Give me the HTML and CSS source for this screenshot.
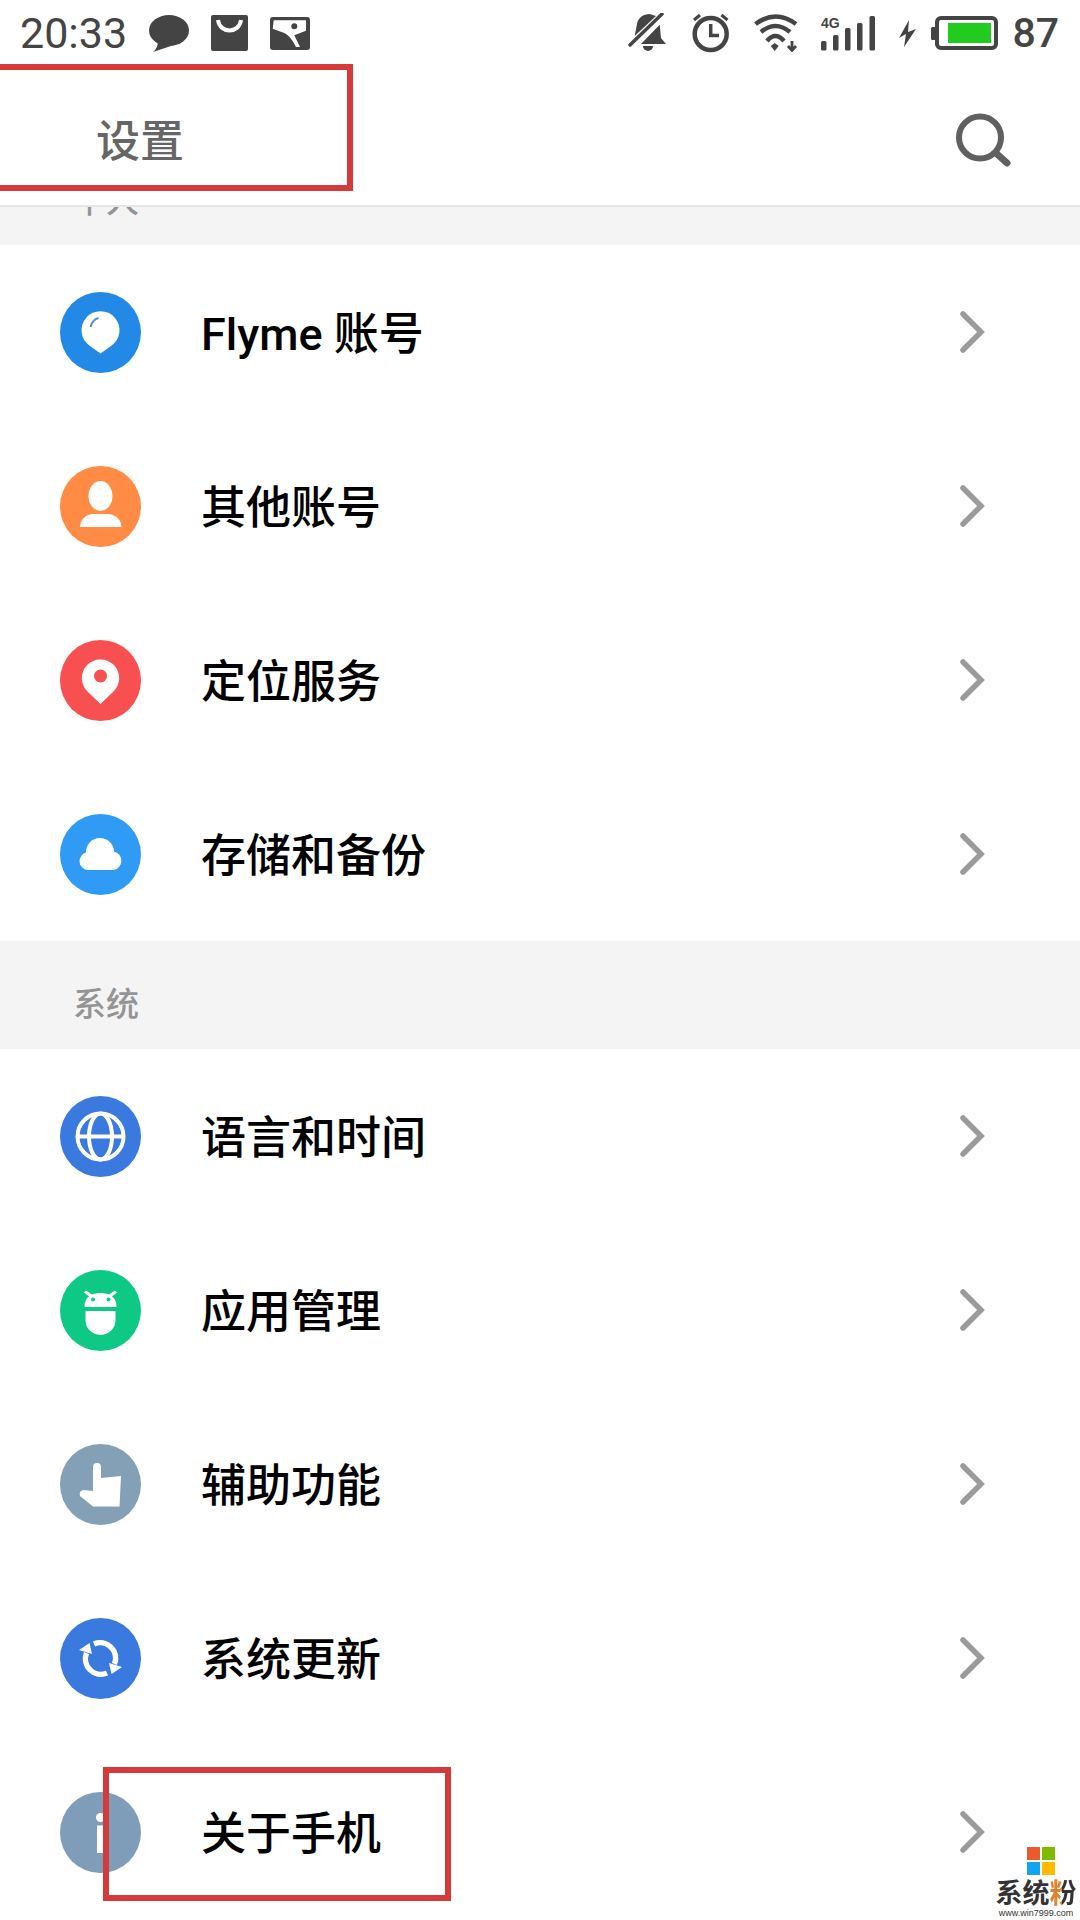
FILE: index.html
```html
<!DOCTYPE html>
<html lang="zh-CN">
<head>
    <meta charset="UTF-8">
    <meta name="viewport" content="width=device-width, initial-scale=1.0">
    <title>设置</title>
    <link rel="stylesheet" href="styles.css">
</head>
<body>
    <svg class="defs" width="0" height="0">
        <symbol id="chev" viewBox="0 0 26 46">
            <path d="M4 5 L22 23 L4 41" fill="none" stroke="#9b9b9b" stroke-width="5.5" stroke-linecap="round" stroke-linejoin="miter"/>
        </symbol>
    </svg>

    <div class="status">
        <div class="status-left">
            <span class="time">20:33</span>
            <svg width="40" height="37" viewBox="0 0 40 37"><ellipse cx="20" cy="15.5" rx="20" ry="15.5" fill="#444"/><path d="M9 26 L14 29 L22 31 L4 37 Q9 33 9 26Z" fill="#444"/></svg>
            <svg width="37" height="36" viewBox="0 0 37 36"><rect width="37" height="36" rx="2" fill="#444"/><path d="M7 5 C9 19 28 19 30 5" fill="none" stroke="#fff" stroke-width="4"/></svg>
            <svg width="40" height="33" viewBox="0 0 40 33"><rect width="40" height="33" rx="3" fill="#444"/><path d="M3.7 3.3 H36 V13.7 L24.3 18.3 L30 30 H26 C23 24 19 18 14.3 16 L2.7 11.7Z" fill="#fff"/><circle cx="24.3" cy="9.3" r="3" fill="#444"/></svg>
        </div>
        <div class="status-right">
            <svg class="bell" width="39" height="40" viewBox="0 0 39 40"><path d="M6.7 23 L9 11 C10 5 15 1 21.7 1 L28 3Z" fill="#444"/><path d="M31.7 11.7 L33 25 L38 31 H13Z" fill="#444"/><path d="M15 33 H25 A5 5 0 0 1 15 33Z" fill="#444"/><path d="M2 32 L34 1" stroke="#444" stroke-width="3.5" stroke-linecap="round"/></svg>
            <svg width="40" height="40" viewBox="0 0 40 40"><circle cx="19.7" cy="21" r="16" fill="none" stroke="#444" stroke-width="4.5"/><path d="M19.7 11 V22.5 H28" fill="none" stroke="#444" stroke-width="3.5"/><path d="M3 7 L9 2 M36.5 7 L30.5 2" stroke="#444" stroke-width="3"/></svg>
            <svg width="46" height="38" viewBox="0 0 46 38"><g fill="none" stroke="#444" stroke-width="4.5"><path d="M2.5 10 Q22.5 -5 43 10"/><path d="M8 18 Q22.5 6 37 18"/><path d="M14 27 Q22.5 17 31 27"/></g><path d="M21.7 37 L17.7 32 L21.7 29 L25.7 32Z" fill="#444"/><path d="M39 27 V35 M35 32 L39 36.5 L43 32" fill="none" stroke="#444" stroke-width="2.8"/></svg>
            <svg width="55" height="35" viewBox="0 0 55 35"><text x="0" y="12" class="net">4G</text><g fill="#444"><rect x="0" y="25" width="5.5" height="9.5" rx="1.5"/><rect x="12" y="19" width="5.5" height="15.5" rx="1.5"/><rect x="24" y="12" width="5.5" height="22.5" rx="1.5"/><rect x="36" y="7" width="5.5" height="27.5" rx="1.5"/><rect x="48.5" y="0" width="5.5" height="34.5" rx="1.5"/></g></svg>
            <div class="charge">
                <svg width="19" height="27" viewBox="0 0 19 27"><path d="M11 0 L1 18 L8 14 L6 27 L18 9 L10 12Z" fill="#444"/></svg>
                <svg width="67" height="34" viewBox="0 0 67 34"><rect x="0" y="11" width="5" height="13" rx="1.5" fill="#444"/><rect x="6" y="2" width="59" height="30" rx="4" fill="#fff" stroke="#444" stroke-width="4"/><rect x="17" y="7" width="43" height="20" fill="#22cc1e"/></svg>
                <span class="level">87</span>
            </div>
        </div>
    </div>

    <div class="topbar">
        <span class="title">设置</span>
        <svg width="60" height="64" viewBox="0 0 60 64"><circle cx="27" cy="33.5" r="21" fill="none" stroke="#606060" stroke-width="6"/><path d="M44 50 L54 59" stroke="#606060" stroke-width="7" stroke-linecap="round"/></svg>
    </div>

    <div class="list">
        <div class="section first">个人</div>
        <div class="row">
            <svg class="ic" viewBox="0 0 81 81"><circle cx="40.5" cy="40.5" r="40.5" fill="#2289e6"/><path d="M40.5 61.5 L30 54 A19 19 0 1 1 51 54Z" fill="#fff"/><path d="M30.5 35 C31.5 31 34.5 27 38.5 26" fill="none" stroke="#5b8fc0" stroke-width="2"/></svg>
            <span class="label">Flyme 账号</span>
            <svg class="chev"><use href="#chev"/></svg>
        </div>
        <div class="row">
            <svg class="ic" viewBox="0 0 81 81"><circle cx="40.5" cy="40.5" r="40.5" fill="#ff8b45"/><ellipse cx="40.5" cy="30" rx="12" ry="15" fill="#fff"/><path d="M20 61 C20 53 27 48 33 48 H48 C54 48 61.5 53 61.5 61Z" fill="#fff"/></svg>
            <span class="label">其他账号</span>
            <svg class="chev"><use href="#chev"/></svg>
        </div>
        <div class="row">
            <svg class="ic" viewBox="0 0 81 81"><circle cx="40.5" cy="40.5" r="40.5" fill="#f85050"/><path d="M40.5 64 L28 52 A18.7 18.7 0 1 1 53 52Z" fill="#fff"/><circle cx="40.5" cy="36" r="6.5" fill="#f85050"/></svg>
            <span class="label">定位服务</span>
            <svg class="chev"><use href="#chev"/></svg>
        </div>
        <div class="row">
            <svg class="ic" viewBox="0 0 81 81"><circle cx="40.5" cy="40.5" r="40.5" fill="#2f9bf5"/><path d="M27 56 A9 9 0 0 1 26 38.5 A14 14 0 0 1 54 37.5 A9.5 9.5 0 0 1 54 56Z" fill="#fff"/></svg>
            <span class="label">存储和备份</span>
            <svg class="chev"><use href="#chev"/></svg>
        </div>

        <div class="section second">系统</div>
        <div class="row">
            <svg class="ic" viewBox="0 0 81 81"><circle cx="40.5" cy="40.5" r="40.5" fill="#3a79dd"/><g fill="none" stroke="#fff" stroke-width="4"><circle cx="40.5" cy="40.5" r="23"/><ellipse cx="40.5" cy="40.5" rx="11.5" ry="23"/><path d="M17 40.5 H64"/></g></svg>
            <span class="label">语言和时间</span>
            <svg class="chev"><use href="#chev"/></svg>
        </div>
        <div class="row">
            <svg class="ic" viewBox="0 0 81 81"><circle cx="40.5" cy="40.5" r="40.5" fill="#0ec985"/><path d="M24.5 37 C24.5 32 26 28.5 29 26.5 L24 22.5 L26 20.5 L32 24.5 C37 22.5 44 22.5 49 24.5 L55 20.5 L57 22.5 L52 26.5 C55 28.5 56.5 32 56.5 37Z" fill="#fff"/><circle cx="33" cy="29.5" r="2" fill="#0ec985"/><circle cx="48.5" cy="29.5" r="2" fill="#0ec985"/><path d="M25.5 41 H55.5 V50 A15 15 0 0 1 25.5 50Z" fill="#fff"/></svg>
            <span class="label">应用管理</span>
            <svg class="chev"><use href="#chev"/></svg>
        </div>
        <div class="row">
            <svg class="ic" viewBox="0 0 81 81"><circle cx="40.5" cy="40.5" r="40.5" fill="#84a0b7"/><path d="M33 23 A4 4 0 0 1 41 23 V34 L61 32 L59.5 62.5 H33 L20 52 Q18.5 47 23.5 46 L33 47Z" fill="#fff"/></svg>
            <span class="label">辅助功能</span>
            <svg class="chev"><use href="#chev"/></svg>
        </div>
        <div class="row">
            <svg class="ic" viewBox="0 0 81 81"><circle cx="40.5" cy="40.5" r="40.5" fill="#3a79dd"/><g fill="none" stroke="#fff" stroke-width="5.5"><path d="M34 26 A15.5 15.5 0 0 1 54.5 46"/><path d="M47 55 A15.5 15.5 0 0 1 26.5 35"/></g><path d="M49 45 L62 49 L51.5 56Z M32 36 L19 32 L29.5 25Z" fill="#fff"/></svg>
            <span class="label">系统更新</span>
            <svg class="chev"><use href="#chev"/></svg>
        </div>
        <div class="row">
            <svg class="ic" viewBox="0 0 81 81"><circle cx="40.5" cy="40.5" r="40.5" fill="#7f9db8"/><circle cx="40.5" cy="25.5" r="4.5" fill="#fff"/><rect x="37" y="33.5" width="7" height="27.5" fill="#fff"/></svg>
            <span class="label">关于手机</span>
            <svg class="chev"><use href="#chev"/></svg>
        </div>
    </div>

    <div class="mark mark-title"></div>
    <div class="mark mark-about"></div>

    <div class="logo">
        <div class="logo-win"><i class="c1"></i><i class="c2"></i><i class="c3"></i><i class="c4"></i></div>
        <div class="logo-name">系统<span class="fen">粉</span></div>
        <div class="logo-url">www.win7999.com</div>
    </div>
</body>
</html>
```

FILE: styles.css
```css
* {
    margin: 0;
    padding: 0;
    box-sizing: border-box;
}
body {
    position: relative;
    width: 1080px;
    height: 1920px;
    overflow: hidden;
    background: #fff;
    color: #000;
    font-family: Roboto, "Noto Sans CJK SC", sans-serif;
}
.defs {
    position: absolute;
}
svg {
    display: block;
    flex-shrink: 0;
}


.status {
    display: flex;
    justify-content: space-between;
    align-items: center;
    height: 66px;
    padding: 0 21px 0 20px;
    color: #444;
}
.status-left {
    display: flex;
    align-items: center;
    gap: 22px;
}
.status-right {
    display: flex;
    align-items: center;
    gap: 22px;
}
.bell {
    margin-right: 2px;
}
.charge {
    display: flex;
    align-items: center;
    gap: 14px;
}
.time {
    font-size: 43px;
    line-height: 50px;
}
.level {
    font-size: 41px;
    line-height: 50px;
    font-weight: 500;
}
.net {
    font: 700 14px "Liberation Sans", sans-serif;
    fill: #444;
}


.topbar {
    display: flex;
    justify-content: space-between;
    align-items: center;
    height: 141px;
    padding: 0 67px 0 96px;
    border-bottom: 2px solid #e6e6e6;
    position: relative;
    z-index: 2;
    background: #fff;
}
.title {
    padding-top: 4px;
    font-size: 44px;
    font-weight: 500;
    color: #666;
}


.section {
    height: 107px;
    padding: 20px 0 0 73px;
    line-height: 87px;
    font-size: 33px;
    font-weight: 500;
    color: #949494;
    background: #f4f4f4;
}
.first {
    margin-top: -69px;
}
.second {
    height: 108px;
}
.row {
    display: flex;
    align-items: center;
    gap: 60px;
    height: 174px;
    padding: 0 95px 0 60px;
}
.ic {
    width: 81px;
    height: 81px;
}
.label {
    flex: 1;
    padding-bottom: 3px;
    font-size: 45px;
    font-weight: 500;
}
.chev {
    width: 26px;
    height: 46px;
}


/* 截图上加的红框 */
.mark {
    position: absolute;
    border: 6px solid #d43a3a;
    z-index: 3;
}
.mark-title {
    left: -10px;
    top: 64px;
    width: 363px;
    height: 127px;
}
.mark-about {
    left: 103px;
    top: 1767px;
    width: 348px;
    height: 134px;
}


/* 右下角水印 */
.logo {
    position: absolute;
    right: 0;
    bottom: 0;
    z-index: 4;
    display: flex;
    flex-direction: column;
    align-items: center;
    width: 88px;
    height: 76px;
    background: #fff;
}
.logo-win {
    display: grid;
    grid-template-columns: 13px 13px;
    grid-template-rows: 13px 13px;
    gap: 1.5px;
    margin: 3px 0 0 10px;
}
.logo-win i {
    display: block;
}
.c1 { background: #ea5a2a; }
.c2 { background: #7fba00; }
.c3 { background: #12a4ee; }
.c4 { background: #ffb900; }
.logo-name {
    margin-top: 5px;
    font-size: 27px;
    line-height: 28px;
    font-weight: 700;
    color: #333;
    white-space: nowrap;
}
.fen {
    background: linear-gradient(90deg, #e0802c 45%, #333 45%);
    -webkit-background-clip: text;
    background-clip: text;
    color: transparent;
}
.logo-url {
    font: 9px/10px "Liberation Sans", sans-serif;
    color: #333;
}
```
